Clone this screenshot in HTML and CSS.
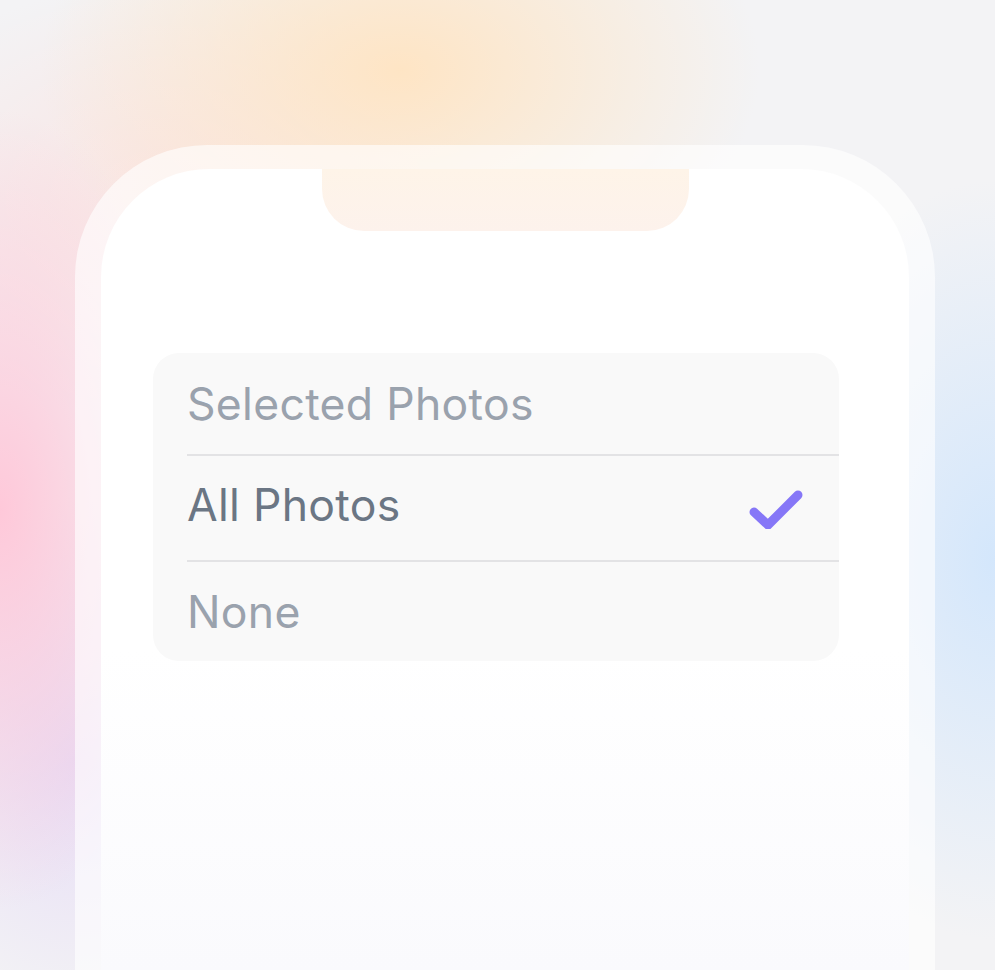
FILE: index.html
```html
<!DOCTYPE html>
<html>
<head>
<meta charset="utf-8">
<link rel="stylesheet" href="styles.css">
</head>
<body>
<div class="stage">
  <div class="phone">
    <div class="screen">
      <div class="notch"></div>
      <div class="card">
        <div class="row row-first"><span class="label muted">Selected Photos</span></div>
        <div class="row row-mid"><span class="label active">All Photos</span>
          <svg class="check" width="60" height="44" viewBox="0 0 60 44"><path d="M9 27 L23 40 L53 10" fill="none" stroke="#8677f7" stroke-width="9" stroke-linecap="round" stroke-linejoin="round"/></svg>
        </div>
        <div class="row row-last"><span class="label muted">None</span></div>
      </div>
    </div>
  </div>
</div>
</body>
</html>
```
FILE: styles.css
```css
html, body {
  margin: 0;
  padding: 0;
}
body {
  width: 995px;
  height: 970px;
  overflow: hidden;
  font-family: "Inter", "Noto Sans", sans-serif;
  background-color: #f3f3f5;
  background-image:
    radial-gradient(ellipse 360px 240px at 400px 70px, rgba(255, 228, 194, 0.95), rgba(255, 228, 194, 0) 100%),
    radial-gradient(ellipse 200px 400px at 0px 510px, rgba(255, 198, 216, 0.95), rgba(255, 198, 216, 0) 100%),
    radial-gradient(ellipse 200px 260px at 80px 760px, rgba(226, 212, 246, 0.75), rgba(226, 212, 246, 0) 100%),
    radial-gradient(ellipse 230px 380px at 995px 560px, rgba(210, 230, 252, 0.95), rgba(210, 230, 252, 0) 100%),
    radial-gradient(ellipse 320px 220px at 170px 200px, rgba(255, 218, 214, 0.6), rgba(255, 218, 214, 0) 100%);
}
.stage {
  padding: 145px 0 0 75px;
}
.phone {
  width: 808px;
  height: 801px;
  padding: 24px 26px 0 26px;
  border-radius: 132px 132px 0 0;
  background: rgba(255, 255, 255, 0.62);
}
.screen {
  position: relative;
  height: 801px;
  border-radius: 108px 108px 0 0;
  background: linear-gradient(#ffffff 0%, #ffffff 60%, #fafafd 100%);
  padding-top: 184px;
  box-sizing: border-box;
}
.notch {
  position: absolute;
  left: 221px;
  top: 0;
  width: 367px;
  height: 62px;
  border-radius: 0 0 42px 42px;
  background: linear-gradient(#fef4e8, #fdf2ec);
}
.card {
  margin-left: 52px;
  width: 686px;
  background: #f9f9f9;
  border-radius: 26px;
  overflow: hidden;
}
.row {
  display: flex;
  align-items: center;
  justify-content: space-between;
  margin-left: 34px;
  box-sizing: border-box;
}
.row-first {
  height: 103px;
  border-bottom: 2px solid #e3e3e5;
}
.row-mid {
  height: 106px;
  padding-bottom: 6px;
  border-bottom: 2px solid #e3e3e5;
}
.row-last {
  height: 99px;
}
.label {
  font-size: 44.5px;
  letter-spacing: 0.3px;
}
.muted {
  color: #9aa2ad;
}
.active {
  color: #6b7684;
}
.check {
  margin-right: 34px;
  margin-top: 4px;
}
```
